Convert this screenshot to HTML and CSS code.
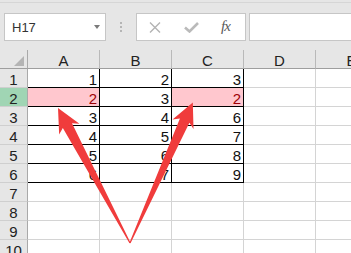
FILE: index.html
```html
<!DOCTYPE html>
<html lang="zh-CN">
<head>
    <meta charset="UTF-8">
    <title>H17</title>
    <link rel="stylesheet" href="styles.css">
</head>
<body>
    <div class="topstrip"></div>
    <div class="toolbar">
        <div class="namebox">
            <span>H17</span>
            <span class="caret"></span>
        </div>
        <div class="grip"><i></i><i></i><i></i></div>
        <div class="fxbox">
            <svg class="icon-x" width="12" height="11" viewBox="0 0 12 11">
                <path d="M1 0.5 L11 10.5 M11 0.5 L1 10.5" stroke="#b3b3b3" stroke-width="1.4" fill="none"/>
            </svg>
            <svg class="icon-ok" width="15" height="11" viewBox="0 0 15 11">
                <path d="M1 5.5 L5.5 9.5 L14 1" stroke="#bababa" stroke-width="2.6" fill="none"/>
            </svg>
            <span class="fx">fx</span>
        </div>
        <div class="formula"></div>
    </div>

    <div class="sheet">
        <div class="row head">
            <div class="rh corner"><span class="tri"></span></div>
            <div class="cell ch">A</div>
            <div class="cell ch">B</div>
            <div class="cell ch">C</div>
            <div class="cell ch">D</div>
            <div class="cell ch">E</div>
        </div>
        <div class="row">
            <div class="rh">1</div>
            <div class="cell b">1</div><div class="cell b">2</div><div class="cell b">3</div>
            <div class="cell"></div><div class="cell"></div>
        </div>
        <div class="row">
            <div class="rh sel">2</div>
            <div class="cell b bad">2</div><div class="cell b">3</div><div class="cell b bad">2</div>
            <div class="cell"></div><div class="cell"></div>
        </div>
        <div class="row">
            <div class="rh">3</div>
            <div class="cell b">3</div><div class="cell b">4</div><div class="cell b">6</div>
            <div class="cell"></div><div class="cell"></div>
        </div>
        <div class="row">
            <div class="rh">4</div>
            <div class="cell b">4</div><div class="cell b">5</div><div class="cell b">7</div>
            <div class="cell"></div><div class="cell"></div>
        </div>
        <div class="row">
            <div class="rh">5</div>
            <div class="cell b">5</div><div class="cell b">6</div><div class="cell b">8</div>
            <div class="cell"></div><div class="cell"></div>
        </div>
        <div class="row">
            <div class="rh">6</div>
            <div class="cell b">6</div><div class="cell b">7</div><div class="cell b">9</div>
            <div class="cell"></div><div class="cell"></div>
        </div>
        <div class="row">
            <div class="rh">7</div>
            <div class="cell"></div><div class="cell"></div><div class="cell"></div><div class="cell"></div><div class="cell"></div>
        </div>
        <div class="row">
            <div class="rh">8</div>
            <div class="cell"></div><div class="cell"></div><div class="cell"></div><div class="cell"></div><div class="cell"></div>
        </div>
        <div class="row">
            <div class="rh">9</div>
            <div class="cell"></div><div class="cell"></div><div class="cell"></div><div class="cell"></div><div class="cell"></div>
        </div>
        <div class="row">
            <div class="rh">10</div>
            <div class="cell"></div><div class="cell"></div><div class="cell"></div><div class="cell"></div><div class="cell"></div>
        </div>
    </div>

    <!-- 标注箭头 -->
    <svg class="arrows" width="351" height="253" viewBox="0 0 351 253">
        <g fill="#f03c3c">
            <polygon transform="translate(130,243) rotate(-118.07)"
                points="0,-0.6 133,-5.2 129,-11.5 153,0 129,11.5 133,5.2 0,0.6"/>
            <polygon transform="translate(130,243) rotate(-65.93)"
                points="0,-0.6 134,-5.2 130,-11.5 154,0 130,11.5 134,5.2 0,0.6"/>
        </g>
    </svg>
</body>
</html>
```

FILE: styles.css
```css
*{
    margin: 0;
    padding: 0;
    box-sizing: border-box;
}
body{
    width: 351px;
    height: 253px;
    overflow: hidden;
    background: #fff;
    font-family: 'Liberation Sans', Arial, sans-serif;
    color: #222;
}

.topstrip{
    height: 2px;
    background: #e6e6e6;
}
.toolbar{
    height: 48px;
    background: #e6e6e6;
    border-top: 1px solid #d6d6d6;
    padding-top: 10px;
    display: flex;
    align-items: flex-start;
}
.namebox{
    margin-left: 4px;
    width: 102px;
    height: 28px;
    background: #fff;
    border: 1px solid #c6c6c6;
    display: flex;
    justify-content: space-between;
    align-items: center;
    padding: 1px 5px 0 7px;
    font-size: 13px;
    color: #333;
}
.namebox .caret{
    width: 0;
    height: 0;
    border-left: 3.5px solid transparent;
    border-right: 3.5px solid transparent;
    border-top: 4px solid #7a7a7a;
    margin-top: -2px;
}
.grip{
    margin-left: 14px;
    width: 2px;
    height: 28px;
    display: flex;
    flex-direction: column;
    justify-content: center;
    gap: 2px;
}
.grip i{
    display: block;
    width: 2px;
    height: 2px;
    background: #b5b5b5;
}
.fxbox{
    margin-left: 14px;
    width: 110px;
    height: 28px;
    background: #fff;
    border: 1px solid #c6c6c6;
    display: flex;
    align-items: center;
    padding-left: 12px;
}
.fxbox svg{
    display: block;
}
.fxbox .icon-ok{
    margin-left: 23px;
}
.fxbox .fx{
    margin-left: 22px;
    font-family: 'Liberation Serif', 'Times New Roman', serif;
    font-style: italic;
    font-size: 15px;
    color: #5a5a5a;
    letter-spacing: -1px;
    margin-top: -2px;
}
.formula{
    margin-left: 3px;
    flex: 1;
    height: 28px;
    background: #fff;
    border: 1px solid #c6c6c6;
    border-right: 0;
}

/* 시트 영역 */
.sheet{
    width: 351px;
    overflow: hidden;
}
.row{
    display: flex;
    height: 19px;
}
.cell{
    flex: none;
    width: 72px;
    height: 19px;
    border-right: 1px solid #d4d4d4;
    border-bottom: 1px solid #d4d4d4;
    text-align: right;
    padding: 2px 2px 0 0;
    font-size: 15px;
    line-height: 18px;
    color: #111;
    background: #fff;
    overflow: hidden;
}
.cell.b{
    border-right-color: #000;
    border-bottom-color: #000;
}
.cell.bad{
    background: #ffc7ce;
    color: #9c0006;
}
.rh{
    flex: none;
    width: 28px;
    height: 19px;
    background: #e6e6e6;
    border-right: 1px solid #a9a9a9;
    border-bottom: 1px solid #cfcfcf;
    text-align: center;
    padding-top: 2px;
    font-size: 15px;
    line-height: 18px;
    color: #222;
}
.rh.sel{
    background: #a0d5b4;
}
.head .cell.ch{
    background: #e6e6e6;
    border-right-color: #b9b9b9;
    border-bottom-color: #9e9e9e;
    text-align: center;
    padding: 2px 0 0 0;
    color: #222;
}
.head .corner{
    border-bottom-color: #9e9e9e;
    display: flex;
    justify-content: flex-end;
    align-items: flex-end;
    padding: 0 3px 2px 0;
}
.corner .tri{
    width: 0;
    height: 0;
    border-left: 10px solid transparent;
    border-bottom: 10px solid #b4b4b4;
}

.arrows{
    position: absolute;
    left: 0;
    top: 0;
    pointer-events: none;
}
```
